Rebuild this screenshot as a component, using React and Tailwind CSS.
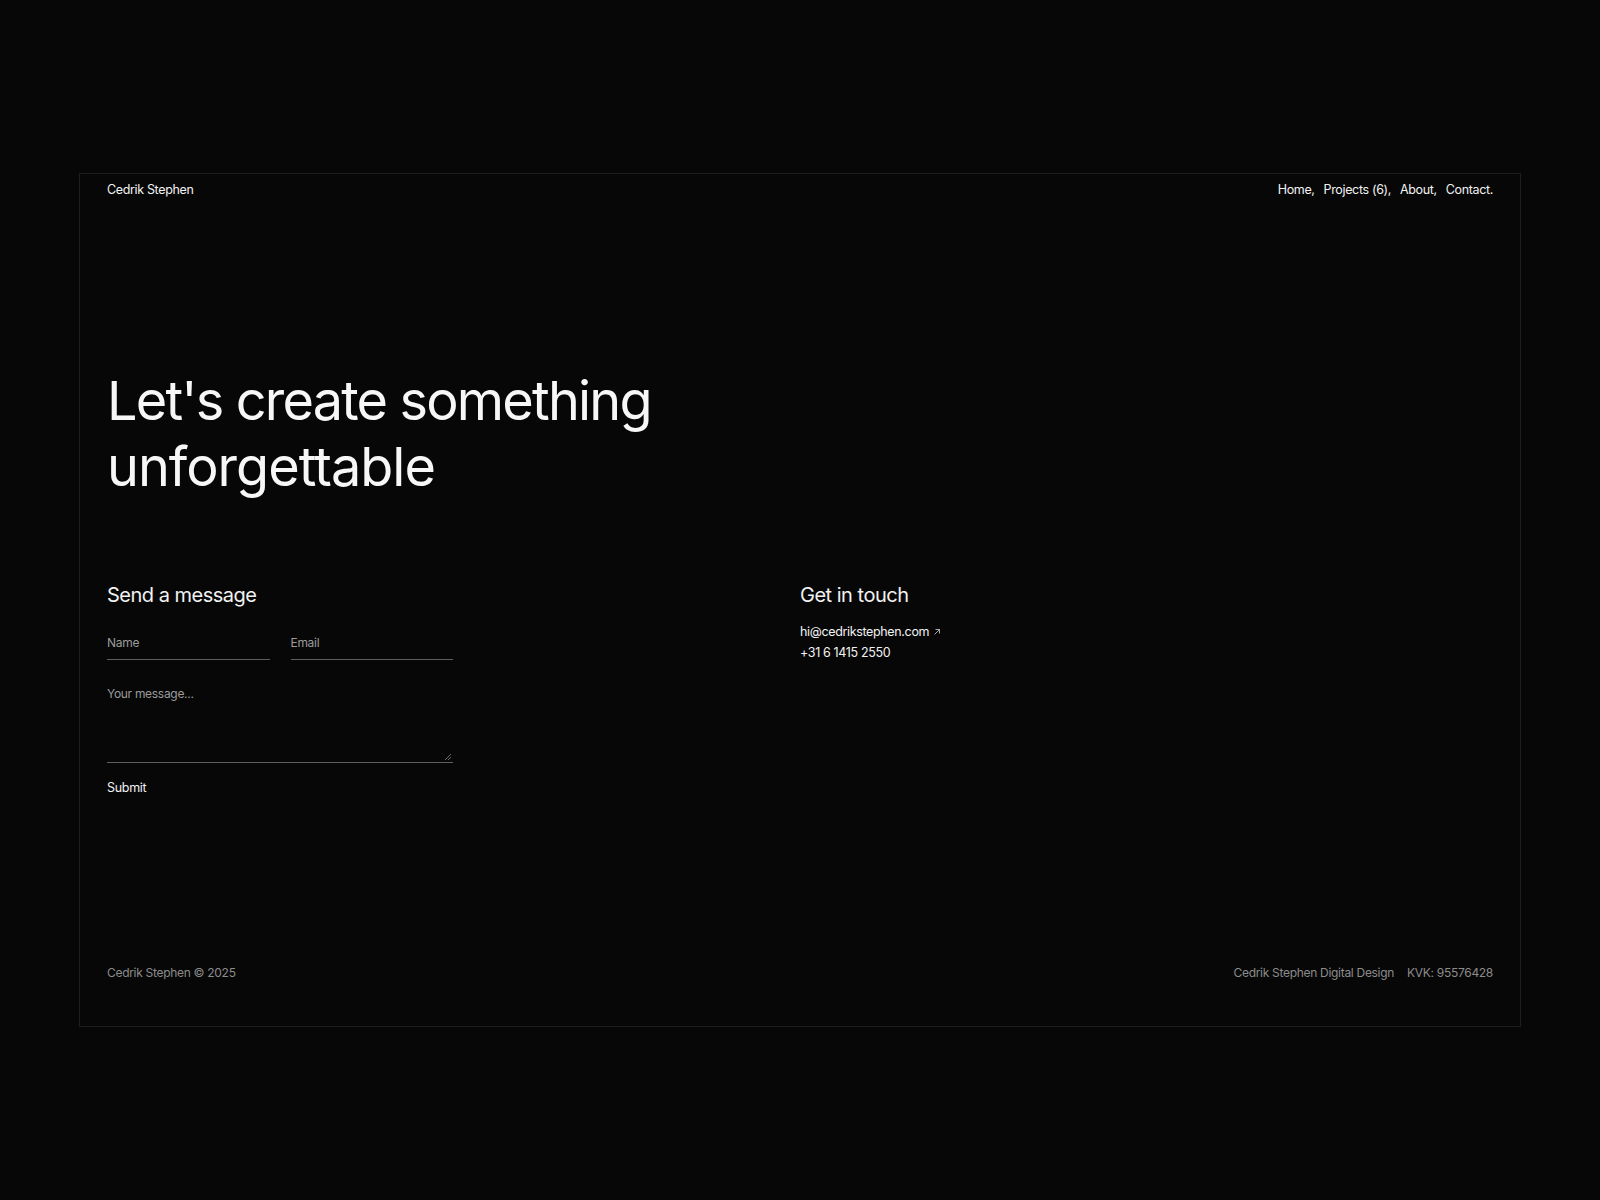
import React from "react";

function ArrowUpRight() {
  return (
    <svg width="8" height="8" viewBox="0 0 8 8" fill="none" className="inline-block ml-[4px]">
      <path d="M1.5 6.5L6.5 1.5M2.5 1.5H6.5V5.5" stroke="#bdbdbd" strokeWidth="0.9" />
    </svg>
  );
}

export default function App() {
  return (
    <div
      className="min-h-screen w-full bg-[#070707] flex items-center justify-center text-[#f2f2f2]"
      style={{ fontFamily: "Inter, 'Noto Sans', sans-serif" }}
    >
      <div className="w-[1442px] h-[854px] border border-[#1e1e1e] flex flex-col px-[27px] pt-[7px] pb-[45px]">
        <header className="flex justify-between items-center h-[18px] text-[12.5px] tracking-[-0.35px]">
          <div>Cedrik Stephen</div>
          <nav className="flex gap-[9px]">
            <span>Home,</span>
            <span>Projects (6),</span>
            <span>About,</span>
            <span>Contact.</span>
          </nav>
        </header>

        <h1 className="mt-[169px] text-[54px] leading-[66px] tracking-[-1.8px] font-normal text-[#f7f7f7]">
          Let's create something
          <br />
          <span className="tracking-[-1px]">unforgettable</span>
        </h1>

        <div className="mt-[81px] grid grid-cols-2">
          <div>
            <h2 className="text-[20px] leading-[28px] tracking-[-0.5px]">Send a message</h2>
            <div className="mt-[26px] w-[346px]">
              <div className="flex gap-[21px]">
                <div className="flex-1 border-b border-[#5e5e5e] pb-[8px] text-[12px] leading-[16px] text-[#9b9b9b] tracking-[-0.3px]">
                  Name
                </div>
                <div className="flex-1 border-b border-[#5e5e5e] pb-[8px] text-[12px] leading-[16px] text-[#9b9b9b] tracking-[-0.3px]">
                  Email
                </div>
              </div>
              <div className="relative mt-[26px] h-[77px] border-b border-[#5e5e5e] text-[12px] leading-[16px] text-[#9b9b9b] tracking-[-0.3px]">
                Your message...
                <svg width="8" height="8" viewBox="0 0 8 8" className="absolute right-[1px] bottom-[1px]">
                  <path d="M7 1L1 7M7 4L4 7" stroke="#6a6a6a" strokeWidth="1" />
                </svg>
              </div>
              <div className="mt-[17px] text-[12.5px] leading-[16px] tracking-[-0.3px]">Submit</div>
            </div>
          </div>
          <div>
            <h2 className="text-[20px] leading-[28px] tracking-[-0.5px]">Get in touch</h2>
            <div className="mt-[12px] text-[12.5px] leading-[21px] tracking-[-0.35px]">
              <div className="flex items-center">
                hi@cedrikstephen.com
                <ArrowUpRight />
              </div>
              <div>+31 6 1415 2550</div>
            </div>
          </div>
        </div>

        <footer className="mt-auto flex justify-between items-center text-[12px] leading-[16px] text-[#8c8c8c] tracking-[-0.3px]">
          <div>Cedrik Stephen © 2025</div>
          <div className="flex gap-[13px]">
            <span>Cedrik Stephen Digital Design</span>
            <span>KVK: 95576428</span>
          </div>
        </footer>
      </div>
    </div>
  );
}
